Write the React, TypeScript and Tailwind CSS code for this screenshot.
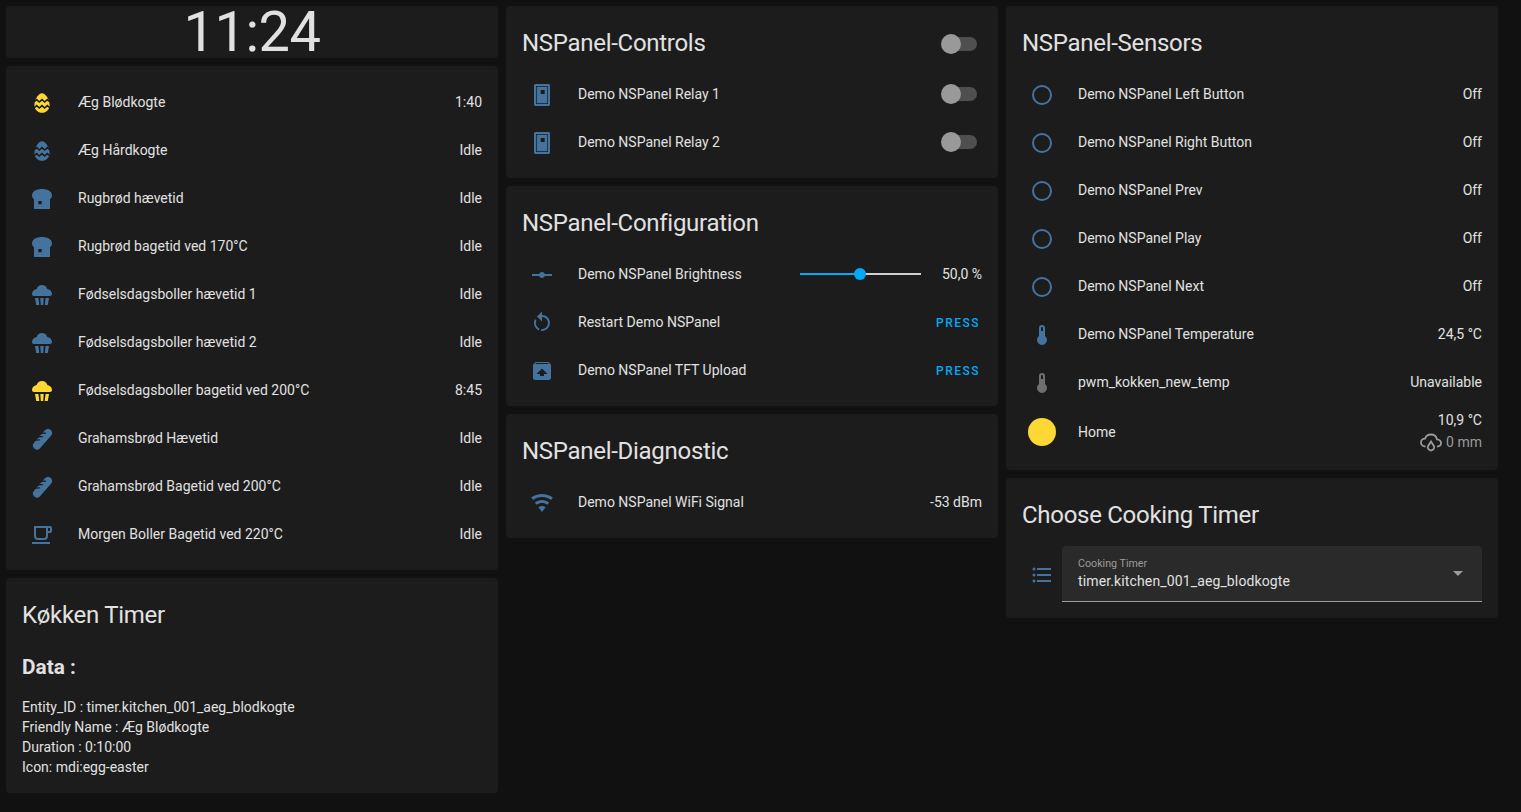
const BLUE = "#44739e";
const YELLOW = "#fdd835";
const GREY = "#6f6f6f";
const CARD = "#1c1c1c";

const EggIcon = ({ color }: { color: string }) => (
  <svg viewBox="0 0 24 24" className="w-6 h-6">
    <path
      fill={color}
      d="M12 2.3C8.6 2.3 4.4 8.5 4.4 14C4.4 18.6 7.8 21.8 12 21.8C16.2 21.8 19.6 18.6 19.6 14C19.6 8.5 15.4 2.3 12 2.3Z"
    />
    <path
      fill="none"
      stroke={CARD}
      strokeWidth="1.5"
      d="M4 11L6.7 8.6L9.3 11L12 8.6L14.7 11L17.3 8.6L20 11M4 17L6.7 14.6L9.3 17L12 14.6L14.7 17L17.3 14.6L20 17"
    />
  </svg>
);

const BreadIcon = () => (
  <svg viewBox="0 0 24 24" className="w-6 h-6">
    <path
      fill={BLUE}
      fillRule="evenodd"
      d="M12 2C7 2 2 4 2 8.5C2 10.3 2.9 11.6 4 12.2V22H20V12.2C21.1 11.6 22 10.3 22 8.5C22 4 17 2 12 2ZM8.3 14H11.7V17.3H8.3Z"
    />
  </svg>
);

const MuffinIcon = ({ color }: { color: string }) => (
  <svg viewBox="0 0 24 24" className="w-6 h-6">
    <path
      fill={color}
      d="M12 2C9.3 2 7.6 3.6 6.6 6C3.8 6.6 2 8.6 2 11C2 12.2 2.8 13 4 13H20C21.2 13 22 12.2 22 11C22 8.6 20.2 6.6 17.4 6C16.4 3.6 14.7 2 12 2Z"
    />
    <path
      fill={color}
      d="M5 15H8.4L9.3 22H6.2ZM10.3 15H13.7L13.2 22H10.8ZM15.6 15H19L17.8 22H14.7Z"
    />
  </svg>
);

const BaguetteIcon = () => (
  <svg viewBox="0 0 24 24" className="w-6 h-6">
    <path fill="none" stroke={BLUE} strokeWidth="8" strokeLinecap="round" d="M7 18.5L18 6" />
    <path
      fill="none"
      stroke={CARD}
      strokeWidth="1.1"
      strokeLinecap="round"
      d="M5.5 13.2L9.5 12.9M8.5 9.9L12.5 9.6M11.5 6.4L15.5 6.1"
    />
  </svg>
);

const MdiIcon = ({ path, color = BLUE }: { path: string; color?: string }) => (
  <svg viewBox="0 0 24 24" className="w-6 h-6">
    <path fill={color} d={path} />
  </svg>
);

const SwitchIcon = () => (
  <svg viewBox="0 0 24 24" className="w-6 h-6">
    <path
      fill={BLUE}
      fillRule="evenodd"
      d="M5.5 1H18.5C19.3 1 20 1.7 20 2.5V21.5C20 22.3 19.3 23 18.5 23H5.5C4.7 23 4 22.3 4 21.5V2.5C4 1.7 4.7 1 5.5 1ZM6 3V21H18V3ZM6.7 3.7H17.3V20.3H6.7ZM10.7 7V11H14.7V7Z"
    />
  </svg>
);

const CircleIcon = () => (
  <svg viewBox="0 0 24 24" className="w-6 h-6">
    <circle cx="12" cy="12" r="9" fill="none" stroke={BLUE} strokeWidth="2" />
  </svg>
);

const RainCloud = () => (
  <svg viewBox="0 0 24 24" className="w-6 h-6">
    <path
      fill="none"
      stroke="#9b9b9b"
      strokeWidth="1.8"
      d="M6.5 16.5C3.8 16.5 2 14.7 2 12.5C2 10.3 3.8 8.6 6 8.6C6.8 6.2 9.2 4.5 12 4.5C15 4.5 17.4 6.6 17.9 9.3C20.2 9.4 22 11 22 13C22 15 20.4 16.5 18 16.5M12 11.5L15 16.2C15.8 18.2 14.2 20.5 12 20.5C9.8 20.5 8.2 18.2 9 16.2Z"
    />
  </svg>
);

const THERMOMETER = "M15 13V5A3 3 0 0 0 9 5V13A5 5 0 1 0 15 13M12 4A1 1 0 0 1 13 5V8H11V5A1 1 0 0 1 12 4Z";
const RESTART =
  "M12,4C14.1,4 16.1,4.8 17.6,6.3C20.7,9.4 20.7,14.5 17.6,17.6C15.8,19.5 13.3,20.2 10.9,19.9L11.4,17.9C13.1,18.1 14.9,17.5 16.2,16.2C18.5,13.9 18.5,10.1 16.2,7.7C15.1,6.6 13.5,6 12,6V10.6L7,5.6L12,0.6V4M6.3,17.6C3.7,15 3.2,11 4.9,7.9L6.4,9.4C5.3,11.6 5.7,14.4 7.6,16.2C8.1,16.7 8.7,17.1 9.4,17.4L8.8,19.4C7.9,19.1 7,18.5 6.3,17.6Z";
const WIFI =
  "M12,21L15.6,16.2C14.6,15.45 13.35,15 12,15C10.65,15 9.4,15.45 8.4,16.2L12,21M12,3C7.95,3 4.21,4.34 1.2,6.6L3,9C5.5,7.12 8.62,6 12,6C15.38,6 18.5,7.12 21,9L22.8,6.6C19.79,4.34 16.05,3 12,3M12,9C9.3,9 6.81,9.89 4.8,11.4L6.6,13.8C8.1,12.67 9.97,12 12,12C14.03,12 15.9,12.67 17.4,13.8L19.2,11.4C17.19,9.89 14.7,9 12,9Z";
const LIST =
  "M7,5H21V7H7V5M7,13V11H21V13H7M4,4.5A1.5,1.5 0 0,1 5.5,6A1.5,1.5 0 0,1 4,7.5A1.5,1.5 0 0,1 2.5,6A1.5,1.5 0 0,1 4,4.5M4,10.5A1.5,1.5 0 0,1 5.5,12A1.5,1.5 0 0,1 4,13.5A1.5,1.5 0 0,1 2.5,12A1.5,1.5 0 0,1 4,10.5M7,19V17H21V19H7M4,16.5A1.5,1.5 0 0,1 5.5,18A1.5,1.5 0 0,1 4,19.5A1.5,1.5 0 0,1 2.5,18A1.5,1.5 0 0,1 4,16.5Z";
const VERTEX = "M2 11H9.17C9.58 9.83 10.69 9 12 9S14.42 9.83 14.83 11H22V13H14.83C14.42 14.17 13.31 15 12 15S9.58 14.17 9.17 13H2V11Z";
const COFFEE =
  "M2,21V19H20V21H2M20,8V5H18V8H20M20,3A2,2 0 0,1 22,5V8A2,2 0 0,1 20,10H18V13A4,4 0 0,1 14,17H8A4,4 0 0,1 4,13V3H20M16,5H6V13A2,2 0 0,0 8,15H14A2,2 0 0,0 16,13V5Z";
const ARCHIVE =
  "M20.54 5.23L19.15 3.55C18.88 3.21 18.47 3 18 3H6C5.53 3 5.12 3.21 4.84 3.55L3.46 5.23C3.17 5.57 3 6 3 6.5V19C3 20.1 3.9 21 5 21H19C20.1 21 21 20.1 21 19V6.5C21 6 20.83 5.57 20.54 5.23M12 9.5L17.5 15H14V17H10V15H6.5L12 9.5M5.12 5L5.93 4H17.93L18.87 5H5.12Z";

const Title = ({ children }: { children: React.ReactNode }) => (
  <h2 className="pt-[21px] pb-[15px] text-2xl leading-8 font-normal tracking-[-0.288px]">{children}</h2>
);

const Card = ({ title, toggle, children }: { title?: string; toggle?: boolean; children: React.ReactNode }) => (
  <div className="bg-[#1c1c1c] rounded pb-4 px-4">
    {title && (
      <div className="flex items-center justify-between">
        <Title>{title}</Title>
        {toggle && (
          <div className="mt-2">
            <Toggle />
          </div>
        )}
      </div>
    )}
    <div className={title ? "flex flex-col gap-2" : "flex flex-col gap-2 pt-4"}>{children}</div>
  </div>
);

const Row = ({ icon, name, children }: { icon: React.ReactNode; name: string; children?: React.ReactNode }) => (
  <div className="flex items-center h-10">
    {/* icons sit a pixel under the text line */}
    <div className="w-10 h-10 pt-0.5 flex items-center justify-center shrink-0">{icon}</div>
    <div className="ml-4 flex-1 truncate">{name}</div>
    {children}
  </div>
);

const Toggle = () => (
  <div className="relative w-[34px] h-3.5 rounded-full bg-[#4f4f4f] mr-[5px]">
    <div className="absolute -left-0.5 top-[-3px] w-5 h-5 rounded-full bg-[#999999]" />
  </div>
);

const PressButton = () => (
  <span className="mr-0.5 pt-0.5 text-xs font-medium tracking-[1.5px] text-[#03a9f4]">PRESS</span>
);

const timers = [
  { icon: <EggIcon color={YELLOW} />, name: "Æg Blødkogte", value: "1:40" },
  { icon: <EggIcon color={BLUE} />, name: "Æg Hårdkogte", value: "Idle" },
  { icon: <BreadIcon />, name: "Rugbrød hævetid", value: "Idle" },
  { icon: <BreadIcon />, name: "Rugbrød bagetid ved 170°C", value: "Idle" },
  { icon: <MuffinIcon color={BLUE} />, name: "Fødselsdagsboller hævetid 1", value: "Idle" },
  { icon: <MuffinIcon color={BLUE} />, name: "Fødselsdagsboller hævetid 2", value: "Idle" },
  { icon: <MuffinIcon color={YELLOW} />, name: "Fødselsdagsboller bagetid ved 200°C", value: "8:45" },
  { icon: <BaguetteIcon />, name: "Grahamsbrød Hævetid", value: "Idle" },
  { icon: <BaguetteIcon />, name: "Grahamsbrød Bagetid ved 200°C", value: "Idle" },
  { icon: <MdiIcon path={COFFEE} />, name: "Morgen Boller Bagetid ved 220°C", value: "Idle" },
];

const sensors = ["Demo NSPanel Left Button", "Demo NSPanel Right Button", "Demo NSPanel Prev", "Demo NSPanel Play", "Demo NSPanel Next"];

export default function App() {
  return (
    <div className="min-h-screen bg-[#111111] text-[#e1e1e1] text-sm font-['Roboto',sans-serif] flex items-start gap-2 pl-1.5 pt-1.5">
      {/* left column */}
      <div className="w-[492px] flex flex-col gap-2">
        <div className="bg-[#1c1c1c] rounded h-[52px] flex items-center justify-center">
          <span className="text-[56px] font-normal leading-[52px] tracking-[-0.5px]">11:24</span>
        </div>
        <Card>
          {timers.map((t) => (
            <Row key={t.name} icon={t.icon} name={t.name}>
              <span>{t.value}</span>
            </Row>
          ))}
        </Card>
        <div className="bg-[#1c1c1c] rounded h-[215px] px-4">
          <Title>Køkken Timer</Title>
          <h3 className="text-[20.8px] leading-6 font-bold mt-[9px]">Data :</h3>
          <p className="mt-[18px] leading-5">
            Entity_ID : timer.kitchen_001_aeg_blodkogte
            <br />
            Friendly Name : Æg Blødkogte
            <br />
            Duration : 0:10:00
            <br />
            Icon: mdi:egg-easter
          </p>
        </div>
      </div>

      {/* middle column */}
      <div className="w-[492px] flex flex-col gap-2">
        <Card title="NSPanel-Controls" toggle>
          <Row icon={<SwitchIcon />} name="Demo NSPanel Relay 1">
            <Toggle />
          </Row>
          <Row icon={<SwitchIcon />} name="Demo NSPanel Relay 2">
            <Toggle />
          </Row>
        </Card>
        <Card title="NSPanel-Configuration">
          <Row icon={<MdiIcon path={VERTEX} />} name="Demo NSPanel Brightness">
            <div className="relative w-[121px] h-0.5 bg-[#cfcfcf] mr-[21px]">
              <div className="h-0.5 w-[60px] bg-[#03a9f4]" />
              <div className="absolute left-[54px] -top-[5px] w-3 h-3 rounded-full bg-[#03a9f4]" />
            </div>
            <span>50,0 %</span>
          </Row>
          <Row icon={<MdiIcon path={RESTART} />} name="Restart Demo NSPanel">
            <PressButton />
          </Row>
          <Row icon={<MdiIcon path={ARCHIVE} />} name="Demo NSPanel TFT Upload">
            <PressButton />
          </Row>
        </Card>
        <Card title="NSPanel-Diagnostic">
          <Row icon={<MdiIcon path={WIFI} />} name="Demo NSPanel WiFi Signal">
            <span>-53 dBm</span>
          </Row>
        </Card>
      </div>

      {/* right column */}
      <div className="w-[492px] flex flex-col gap-2">
        <Card title="NSPanel-Sensors">
          {sensors.map((s) => (
            <Row key={s} icon={<CircleIcon />} name={s}>
              <span>Off</span>
            </Row>
          ))}
          <Row icon={<MdiIcon path={THERMOMETER} />} name="Demo NSPanel Temperature">
            <span>24,5 °C</span>
          </Row>
          <Row icon={<MdiIcon path={THERMOMETER} color={GREY} />} name="pwm_kokken_new_temp">
            <span>Unavailable</span>
          </Row>
          <div className="flex items-center h-11">
            <div className="w-10 flex justify-center shrink-0">
              <div className="w-7 h-7 rounded-full bg-[#fdd835]" />
            </div>
            <div className="ml-4 flex-1">Home</div>
            <div className="flex flex-col items-end leading-5">
              <span>10,9 °C</span>
              <span className="flex items-center gap-[3px] text-[#9b9b9b]">
                <RainCloud />0 mm
              </span>
            </div>
          </div>
        </Card>
        <div className="bg-[#1c1c1c] rounded pb-4 px-4">
          <Title>Choose Cooking Timer</Title>
          <div className="flex items-center">
            <div className="w-10 pt-0.5 flex justify-center shrink-0">
              <MdiIcon path={LIST} />
            </div>
            <div className="flex-1 h-14 bg-[#2a2a2a] rounded-t border-b border-[#9b9b9b] px-4 flex items-center justify-between">
              <div className="flex flex-col -mt-0.5">
                <span className="text-[10.7px] leading-4 text-[#9b9b9b] translate-y-px">Cooking Timer</span>
                <span className="leading-5 tracking-[0.13px]">timer.kitchen_001_aeg_blodkogte</span>
              </div>
              <div className="w-0 h-0 border-x-[5px] border-x-transparent border-t-[5px] border-t-[#9b9b9b] mr-[3px]" />
            </div>
          </div>
        </div>
      </div>
    </div>
  );
}
